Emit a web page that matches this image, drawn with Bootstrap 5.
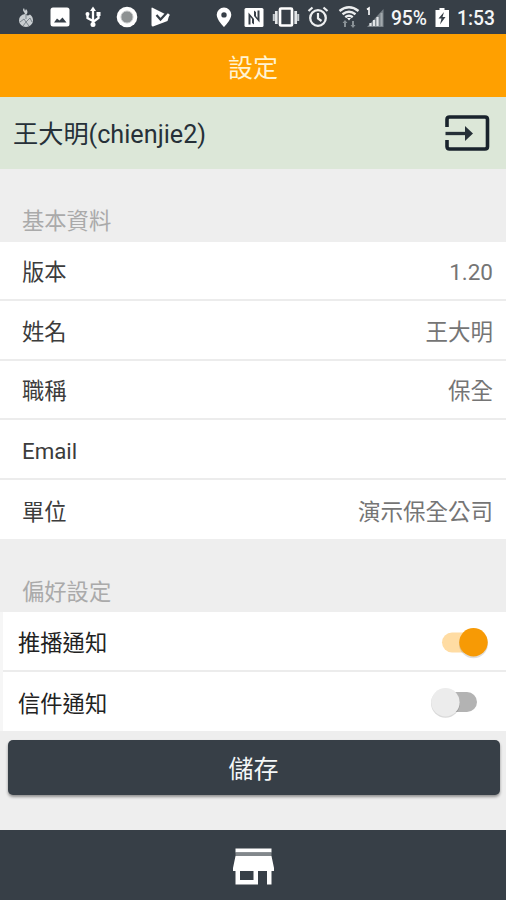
<!DOCTYPE html>
<html lang="zh-Hant">
<head>
<meta charset="utf-8">
<meta name="viewport" content="width=device-width, initial-scale=1">
<title>設定</title>
<link href="https://cdn.jsdelivr.net/npm/bootstrap@5.3.0/dist/css/bootstrap.min.css" rel="stylesheet">
<style>
  :root { --slate: #373f47; --amber: #ffa000; }
  body { font-family: Roboto, "Noto Sans CJK TC", sans-serif; background: #eee; color: #333; font-size: 22px; line-height: 30px; }
  .screen { width: 506px; height: 900px; }
  .status-bar { height: 34px; background: var(--slate); color: #f4f6f7; font-size: 19.3px; font-weight: 500; padding-left: 14px; padding-right: 11px; }
  .status-bar span { padding-top: 3px; }
  .status-left { gap: 9.5px; }
  .battery-level { padding-left: 6px; }
  .status-bar svg { height: 24px; flex: none; }
  .i20 { width: 20px; } .i24 { width: 24px; } .i30 { width: 30px; } .i32 { width: 32px; } .i34 { width: 34px; }
  .title-bar { height: 63px; background: var(--amber); color: #fff3d2; font-size: 25px; padding-top: 6px; }
  .user-bar { height: 72px; background: #dce7d8; color: #263038; font-size: 25.2px; padding: 0 16px 0 13px; }
  .user-bar span { padding-top: 3px; }
  .group-label { color: #aaa; padding-left: 22px; font-size: 22.3px; }
  .group-one { height: 72.5px; padding-bottom: 6px; }
  .group-two { height: 73px; padding-bottom: 5px; }
  .info-list .list-group-item { height: 59.6px; padding: 4px 13px 0 22px; border: 0; border-bottom: 2.5px solid #ececec; color: #3c3c3c; font-size: 22.3px; }
  .info-list .info-value { color: #757575; font-size: 22.5px; }
  .pref-list { border-left: 3px solid #f6f6f6; }
  .pref-list .list-group-item { height: 59.5px; padding: 1px 17px 0 15px; border: 0; border-bottom: 2.5px solid #ececec; color: #222; font-size: 22.3px; }
  .pref-list span { padding-top: 3px; }
  .toggle { width: 58px; height: 40px; }
  .save-area { padding: 8.5px 6.5px 0 7.5px; }
  .save-btn { height: 55px; background: var(--slate); color: #f4f6f7; font-size: 25px; border: 0; border-radius: 5px; box-shadow: 0 2px 3px rgba(0,0,0,.4); padding-top: 11px; }
  .save-btn:hover { background: #2c343b; color: #fff; }
  .tab-bar { height: 70px; background: var(--slate); padding-top: 1px; }
</style>
</head>
<body>
<div class="screen d-flex flex-column overflow-hidden">
  <div class="status-bar d-flex align-items-center justify-content-between flex-shrink-0">
    <div class="status-left d-flex align-items-center">
      <svg class="i24" viewBox="0 0 24 24"><path d="M10 3q-2 2 0 4l1 2q-6 1-6 6.500a7 6.500 0 0 0 14 0q0-4-3-6l-2 1-2-.5q3-3 0-6L11 6z" fill="#c9ced1"/><path d="M6 17l4-3 2 3 4-4 2 4M9 21l3-4 3 4M12 9v5" fill="none" stroke="#7d868c" stroke-width="1"/></svg>
      <svg class="i24" viewBox="0 0 24 24"><rect x="2.500" y="2.500" width="19" height="19" rx="2.500" fill="#fff"/><path d="M6 17.500l3-4 2.500 2 3-3 4 5z" fill="#373f47"/></svg>
      <svg class="i24" viewBox="0 0 24 24"><path d="M12 19V5M12 16l-5.500-3V9M12 17l5.500-4V8.500" fill="none" stroke="#fff" stroke-width="2.300"/><path d="M12 1.500l3 4.500H9z" fill="#fff"/><circle cx="12" cy="19.500" r="2.500" fill="#fff"/><circle cx="6.500" cy="9" r="2" fill="#fff"/><rect x="15.500" y="7" width="4" height="4" fill="#fff"/></svg>
      <svg class="i24" viewBox="0 0 24 24"><circle cx="12" cy="12" r="10.300" fill="#fff"/><circle cx="12" cy="12" r="6" fill="#8d9192" stroke="#c4c6c7"/></svg>
      <svg class="i24" viewBox="0 0 24 24"><path d="M4 2.500L21 11l-1.500 5L5 21.500q-1.500 0-1.500-1.500V3z" fill="#fff"/><path d="M12.500 12.500l3.500 3.500 6-6-3-2.500z" fill="#fff"/><path d="M8.500 10l4 4.500L19.500 7" fill="none" stroke="#373f47" stroke-width="2.200"/></svg>
    </div>
    <div class="d-flex align-items-center">
      <svg class="i30" viewBox="0 0 30 24"><path fill-rule="evenodd" d="M15 2.500a7.300 7.300 0 0 0-7.300 7.300C7.700 15 15 22 15 22s7.300-7 7.300-12.200A7.300 7.300 0 0 0 15 2.500zm0 4.700a2.700 2.700 0 1 1 0 5.400 2.700 2.700 0 0 1 0-5.400z" fill="#fff"/></svg>
      <svg class="i30" viewBox="0 0 30 24"><rect x="5.500" y="3" width="19" height="19" rx="1.500" fill="#fff"/><path d="M9.500 19.500V7.500L15 14v5.500l-2-1.500v-4l-1.500-2v7.500zM20.500 5.500v12L15 11V5.500l2 1.500v4l1.500 2V5.500z" fill="#373f47"/></svg>
      <svg class="i34" viewBox="0 0 34 24"><rect x="11" y="3.500" width="12" height="17" rx="1" fill="none" stroke="#fff" stroke-width="2.700"/><path d="M7.300 6v13M26.700 6v13" stroke="#e3e6e8" stroke-width="2.700"/><path d="M4.800 9v7M29.200 9v7" stroke="#c8cdd0" stroke-width="2"/></svg>
      <svg class="i30" viewBox="0 0 30 24"><circle cx="15" cy="13" r="7.800" fill="none" stroke="#eef0f1" stroke-width="2.300"/><path d="M15 8v5.500l3.500 2.500M5.500 6l4-3.500M24.500 6l-4-3.500" fill="none" stroke="#eef0f1" stroke-width="2.200"/></svg>
      <svg class="i32" viewBox="0 0 30 24"><path d="M5.500 6q9.500-7.500 19 0M8.500 9.200q6.500-5 13 0M11.300 12.200q3.700-3 7.400 0" fill="none" stroke="#eceeef" stroke-width="2.400"/><path d="M13 13h4l-2 2.500z" fill="#fff"/><path d="M11 22v-5M19 16v5" stroke="#899196" stroke-width="2"/><path d="M8.500 18l2.500-3 2.500 3zM16.500 20l2.500 3 2.500-3z" fill="#899196"/></svg>
      <svg class="i20" viewBox="0 0 20 24"><path d="M2 22L18.500 4v18z" fill="#798187"/><path d="M5.500 21v-3M9 21v-6M12.500 21v-9" stroke="#e2e5e7" stroke-width="2.200"/><path d="M16.500 21V8" stroke="#a3a9ad" stroke-width="2"/><path d="M2 4.500l2-1.500v7" fill="none" stroke="#fff" stroke-width="1.600"/></svg>
      <span class="battery-level">95%</span>
      <svg class="i30" viewBox="0 0 30 24"><path d="M12.500 3h5v2H22v17H8.500V5h4z" fill="#fff"/><path d="M17 7l-5.500 6.500h3l-1.500 6 5.500-7.500h-3z" fill="#373f47"/></svg>
      <span>1:53</span>
    </div>
  </div>

  <header class="title-bar d-flex align-items-center justify-content-center flex-shrink-0">設定</header>

  <div class="user-bar d-flex align-items-center justify-content-between flex-shrink-0">
    <span>王大明(chienjie2)</span>
    <svg width="46" height="38" viewBox="0 0 46 38"><path d="M3 13V5.500Q3 3 5.500 3H41q2.500 0 2.500 2.500v27Q43.500 35 41 35H5.500Q3 35 3 32.500V26" fill="none" stroke="#19232c" stroke-width="3.600"/><path d="M1.500 19.500H24" stroke="#263038" stroke-width="3.300"/><path d="M21 12l8 7.500-8 7.500z" fill="#263038"/></svg>
  </div>

  <div class="group-label group-one d-flex align-items-end flex-shrink-0">基本資料</div>
  <ul class="info-list list-group list-group-flush flex-shrink-0">
    <li class="list-group-item d-flex align-items-center justify-content-between"><span>版本</span><span class="info-value">1.20</span></li>
    <li class="list-group-item d-flex align-items-center justify-content-between"><span>姓名</span><span class="info-value">王大明</span></li>
    <li class="list-group-item d-flex align-items-center justify-content-between"><span>職稱</span><span class="info-value">保全</span></li>
    <li class="list-group-item d-flex align-items-center justify-content-between"><span>Email</span></li>
    <li class="list-group-item d-flex align-items-center justify-content-between"><span>單位</span><span class="info-value">演示保全公司</span></li>
  </ul>

  <div class="group-label group-two d-flex align-items-end flex-shrink-0">偏好設定</div>
  <ul class="pref-list list-group list-group-flush flex-shrink-0">
    <li class="list-group-item d-flex align-items-center justify-content-between"><span>推播通知</span>
      <svg class="toggle" viewBox="0 0 58 40" role="switch" aria-checked="true"><rect x="11" y="10.500" width="36" height="20" rx="10" fill="#ffdca3"/><circle cx="42.500" cy="21.700" r="14.500" fill="#000" opacity=".13"/><circle cx="42.500" cy="20.300" r="14.200" fill="#f79a05"/></svg>
    </li>
    <li class="list-group-item d-flex align-items-center justify-content-between"><span>信件通知</span>
      <svg class="toggle" viewBox="0 0 58 40" role="switch" aria-checked="false"><rect x="10" y="10" width="36" height="20" rx="10" fill="#b3b3b3"/><circle cx="14.500" cy="21.200" r="14.500" fill="#000" opacity=".15"/><circle cx="14.500" cy="20.300" r="14.200" fill="#ececec"/></svg>
    </li>
  </ul>

  <div class="save-area flex-shrink-0">
    <button type="button" class="save-btn btn w-100 d-flex align-items-center justify-content-center">儲存</button>
  </div>

  <nav class="tab-bar d-flex align-items-center justify-content-center mt-auto flex-shrink-0">
    <svg width="42" height="38" viewBox="0 0 42 38"><path d="M3.500 1.500h36v4h-36z" fill="#fff"/><path d="M3.500 5.500h36V9h-36z" fill="#82878b"/><path fill-rule="evenodd" d="M3.500 9h36l2.500 12v3h-2.500v13.500h-4.500V24h-9v13.500H3.500V24H1v-3zM8 24v9h13.500v-9z" fill="#fff"/></svg>
  </nav>
</div>
<script src="https://cdn.jsdelivr.net/npm/bootstrap@5.3.0/dist/js/bootstrap.bundle.min.js"></script>
</body>
</html>
